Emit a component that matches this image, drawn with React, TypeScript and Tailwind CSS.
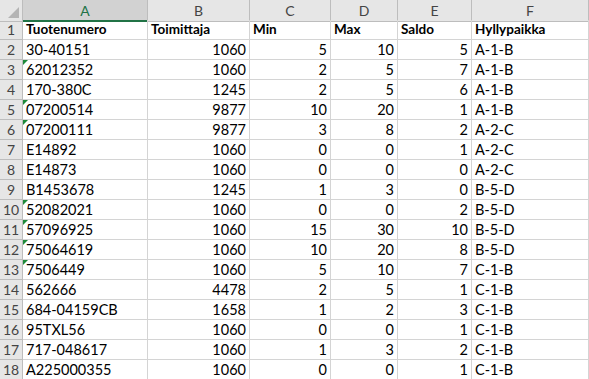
import React from "react";

const cols = ["A", "B", "C", "D", "E", "F"];

const rows: (string | number)[][] = [
  ["30-40151", 1060, 5, 10, 5, "A-1-B"],
  ["62012352", 1060, 2, 5, 7, "A-1-B"],
  ["170-380C", 1245, 2, 5, 6, "A-1-B"],
  ["07200514", 9877, 10, 20, 1, "A-1-B"],
  ["07200111", 9877, 3, 8, 2, "A-2-C"],
  ["E14892", 1060, 0, 0, 1, "A-2-C"],
  ["E14873", 1060, 0, 0, 0, "A-2-C"],
  ["B1453678", 1245, 1, 3, 0, "B-5-D"],
  ["52082021", 1060, 0, 0, 2, "B-5-D"],
  ["57096925", 1060, 15, 30, 10, "B-5-D"],
  ["75064619", 1060, 10, 20, 8, "B-5-D"],
  ["7506449", 1060, 5, 10, 7, "C-1-B"],
  ["562666", 4478, 2, 5, 1, "C-1-B"],
  ["684-04159CB", 1658, 1, 2, 3, "C-1-B"],
  ["95TXL56", 1060, 0, 0, 1, "C-1-B"],
  ["717-048617", 1060, 1, 3, 2, "C-1-B"],
  ["A225000355", 1060, 0, 0, 1, "C-1-B"],
];

// numbers stored as text get the little green corner
const flagged = ["62012352", "07200514", "07200111", "52082021", "57096925", "75064619", "7506449"];

const heads = ["Tuotenumero", "Toimittaja", "Min", "Max", "Saldo", "Hyllypaikka"];

export default function App() {
  return (
    <div className="w-[589px] h-[379px] overflow-hidden bg-white text-[14.5px] text-black" style={{ fontFamily: "Lato, 'Liberation Sans', sans-serif" }}>
      <div className="grid grid-cols-[23px_125px_102px_81px_67px_74px_1fr] auto-rows-[20px]">
        {/* column headers */}
        <div className="relative h-[22px] bg-[#e6e6e6] border-r border-b border-[#bdbdbd]">
          <div className="absolute right-[3px] bottom-[3px] w-0 h-0 border-l-[11px] border-l-transparent border-b-[11px] border-b-[#b4b4b4]" />
        </div>
        {cols.map((c, i) => (
          <div
            key={c}
            className={
              i === 0
                ? "h-[22px] flex items-center justify-center text-[14px] bg-[#d2d2d2] text-[#217346] border-r border-[#bdbdbd] border-b-2 border-b-[#217346]"
                : "h-[22px] flex items-center justify-center text-[14px] bg-[#e6e6e6] text-[#444] border-r border-b border-[#bdbdbd]"
            }
          >
            {c}
          </div>
        ))}

        {/* header row */}
        <div className="flex items-center justify-center text-[14px] bg-[#e6e6e6] text-[#444] border-r border-b border-[#bdbdbd]">1</div>
        {heads.map((h) => (
          <div key={h} className="flex items-center px-[3px] text-[13.5px] font-bold border-r border-b border-[#d4d4d4] whitespace-nowrap">
            {h}
          </div>
        ))}

        {rows.map((r, ri) => (
          <React.Fragment key={ri}>
            <div className="flex items-center justify-center text-[14px] bg-[#e6e6e6] text-[#444] border-r border-b border-[#bdbdbd]">{ri + 2}</div>
            {r.map((v, ci) => (
              <div
                key={ci}
                className={
                  typeof v === "number"
                    ? "flex items-center justify-end px-[3px] border-r border-b border-[#d4d4d4] whitespace-nowrap"
                    : "relative flex items-center px-[3px] border-r border-b border-[#d4d4d4] whitespace-nowrap"
                }
              >
                {typeof v === "string" && flagged.includes(v) && (
                  <div className="absolute left-0 top-0 w-0 h-0 border-t-[5px] border-t-[#1e8a3a] border-r-[5px] border-r-transparent" />
                )}
                {v}
              </div>
            ))}
          </React.Fragment>
        ))}
      </div>
    </div>
  );
}
